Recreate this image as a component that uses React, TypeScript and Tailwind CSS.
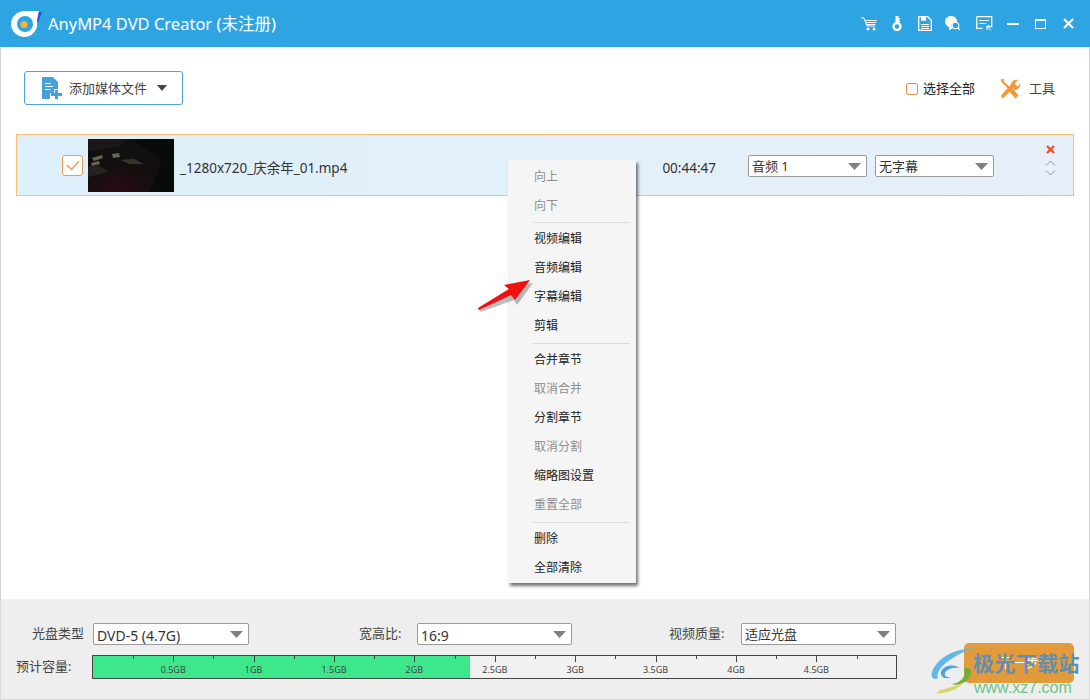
import React from 'react';

const Caret = ({ className = '' }: { className?: string }) => (
  <svg width="13" height="7" viewBox="0 0 13 7" className={className}>
    <path d="M0 0h13L6.5 7z" fill="#7f7f7f" />
  </svg>
);

const Select = ({ label, className, textClass = 'text-[13px]' }: { label: string; className: string; textClass?: string }) => (
  <div className={`flex h-[22px] items-center justify-between rounded-[2px] border border-[#9a9a9a] bg-white pl-[3px] pr-[5px] text-[#333] ${className}`}>
    <span className={`pt-[2px] ${textClass}`}>{label}</span>
    <Caret />
  </div>
);

const Logo = () => (
  <svg width="32" height="28" viewBox="0 0 32 28" className="shrink-0">
    <path d="M24 2h7l-5 14z" fill="#2257d8" />
    <path d="M14 1h14c-1 3-1 6-2 9 2 8-4 17-12 17C6 27 0 21 0 14S6 1 14 1z" fill="#fff" />
    <circle cx="14" cy="14" r="8" fill="#2fa4e3" />
    <circle cx="13" cy="14.5" r="3.6" fill="#f6b52c" />
  </svg>
);

const TitleIcons = () => (
  <div className="flex items-center text-white">
    <svg width="16" height="14" viewBox="0 0 16 14" className="ml-0">
      <path d="M0 1h3l3 8h8" fill="none" stroke="#fff" strokeWidth="1" />
      <path d="M4 3h12v1H4zM5 5h10v1H5zM5.500 7h9v1h-9z" fill="#fff" />
      <circle cx="7" cy="12" r="1.500" fill="#fff" />
      <circle cx="13" cy="12" r="1.500" fill="#fff" />
    </svg>
    <svg width="10" height="15" viewBox="0 0 10 15" className="ml-[15px]">
      <path d="M3.500 0h3v7h-3z" fill="#fff" />
      <path d="M6 2h2v1.500H6zM6 4.500h2V6H6z" fill="#fff" />
      <circle cx="5" cy="10.500" r="3.500" fill="none" stroke="#fff" strokeWidth="2.400" />
    </svg>
    <svg width="14" height="15" viewBox="0 0 14 15" className="ml-[16px]">
      <path d="M.7.700h9l3.600 3.600v10H.7z" fill="none" stroke="#fff" strokeWidth="1.300" />
      <path d="M3 .700h5v4H3zM3 8h8v1H3zM3 10h8v1H3zM3 12h8v1H3z" fill="#fff" />
    </svg>
    <svg width="16" height="15" viewBox="0 0 16 15" className="ml-[13px]">
      <path d="M6 0c3.300 0 6 2.300 6 5 0 .5 0 .8-.2 1.200A3.800 3.800 0 0 0 6.500 10c0 1 .3 1.800.8 2.500L4 14.500l.3-3.200C1.800 10.400 0 8 0 5.500 0 2.500 2.700 0 6 0z" fill="#fff" />
      <circle cx="10.500" cy="9.500" r="3.300" fill="none" stroke="#fff" strokeWidth="1.100" />
      <path d="M13 12l2 2" stroke="#fff" strokeWidth="1.100" />
    </svg>
    <svg width="17" height="15" viewBox="0 0 17 15" className="ml-[15px]">
      <path d="M.7.700h15v10h-5.500M6.500 12.300H.7V.700" fill="none" stroke="#fff" strokeWidth="1.300" />
      <path d="M3 4h10v1H3zM3 7h7v1H3z" fill="#fff" />
      <path d="M11 10v4M11 10h3.500M11 10l4 4.500" fill="none" stroke="#fff" strokeWidth="1" />
    </svg>
    <div className="ml-[14px] h-[2px] w-[12px] bg-white" />
    <div className="ml-[16px] h-[10px] w-[11px] border border-t-2 border-white" />
    <svg width="11" height="11" viewBox="0 0 11 11" className="ml-[17px]">
      <path d="M1 1l9 9M10 1l-9 9" stroke="#fff" strokeWidth="2" />
    </svg>
  </div>
);

const menu: (null | { t: string; off: boolean })[] = [
  { t: '向上', off: true },
  { t: '向下', off: true },
  null,
  { t: '视频编辑', off: false },
  { t: '音频编辑', off: false },
  { t: '字幕编辑', off: false },
  { t: '剪辑', off: false },
  null,
  { t: '合并章节', off: false },
  { t: '取消合并', off: true },
  { t: '分割章节', off: false },
  { t: '取消分割', off: true },
  { t: '缩略图设置', off: false },
  { t: '重置全部', off: true },
  null,
  { t: '删除', off: false },
  { t: '全部清除', off: false },
];

const ticks = Array.from({ length: 19 }, (_, i) => i);

const CapacityBar = () => (
  <div className="relative h-[24px] w-[805px] border border-[#444] bg-[#f1f1f1]">
    <div className="h-full w-[377px] bg-[#3de88c]" />
    {ticks.map((i) => {
      const major = i % 2 === 1;
      const gb = (i + 1) / 4;
      return (
        <React.Fragment key={i}>
          <div className={`absolute top-0 w-px bg-[#444] ${major ? 'h-[6px]' : 'h-[3px]'}`} style={{ left: 40 + i * 40.2 }} />
          {major && (
            <span className="absolute top-[7px] w-[50px] -translate-x-1/2 text-center text-[9px] leading-[14px] text-[#444]" style={{ left: 40 + i * 40.2 }}>
              {gb}GB
            </span>
          )}
        </React.Fragment>
      );
    })}
  </div>
);

export default function App() {
  return (
    <div className="relative flex h-[700px] w-[1090px] flex-col overflow-hidden bg-white font-['Noto_Sans','Noto_Sans_CJK_SC',sans-serif]">
      {/* title bar */}
      <div className="flex h-[47px] shrink-0 items-center justify-between bg-[#2fa4e3] pl-[11px] pr-[16px]">
        <div className="flex items-center gap-[5px]">
          <Logo />
          <span className="pt-[1px] text-[16.500px] text-white">AnyMP4 DVD Creator (未注册)</span>
        </div>
        <TitleIcons />
      </div>

      <div className="flex min-h-0 flex-1 flex-col border-x border-[#d2d2d2]">
        {/* toolbar */}
        <div className="flex h-[87px] shrink-0 items-start justify-between pl-[23px] pr-[34px] pt-[24px]">
          <div className="flex h-[34px] w-[159px] items-center rounded-[3px] border border-[#4ba3dd] pl-[17px]">
            <svg width="21" height="22" viewBox="0 0 21 22">
              <path d="M1 0h10l5 5v7h-4v4H8v6H1a1 1 0 0 1-1-1V1a1 1 0 0 1 1-1z" fill="#45a1dc" />
              <path d="M3 6h6v1H3zM3 9h8v1H3zM3 12h6v1H3z" fill="#fff" />
              <path d="M13 13h3v3h4v3h-4v3h-3v-3H9v-3h4z" fill="#45a1dc" />
            </svg>
            <span className="ml-[6px] pt-[2px] text-[13px] text-[#444]">添加媒体文件</span>
            <svg width="10" height="6" viewBox="0 0 10 6" className="ml-[10px]">
              <path d="M0 0h10L5 6z" fill="#444" />
            </svg>
          </div>
          <div className="flex items-center pt-[8px]">
            <div className="h-[12px] w-[12px] rounded-[2px] border border-[#e9924b]" />
            <span className="ml-[5px] text-[13px] text-[#222]">选择全部</span>
            <svg width="20" height="20" viewBox="0 0 20 20" className="ml-[25px]">
              <path d="M2 2l9 9" stroke="#f4963a" strokeWidth="2.200" />
              <path d="M1 1.500L4 0.500" stroke="#f4963a" strokeWidth="2" />
              <path d="M10 10l7 8" stroke="#f4963a" strokeWidth="4.500" />
              <path d="M3 17L13 6" stroke="#f4963a" strokeWidth="3.600" strokeLinecap="round" />
              <path d="M11 6c0-3 3-6 7-5l-3 3 1 2.500 2.500.5 1.500-3c1 4-2 7-6 7z" fill="#f4963a" />
            </svg>
            <span className="ml-[9px] text-[13px] text-[#444]">工具</span>
          </div>
        </div>

        {/* file row */}
        <div className="mx-[15px] flex h-[62px] shrink-0 items-center border border-[#fbbd74] bg-gradient-to-r from-[#ddf0fb] to-[#e7eff9]">
          <div className="ml-[45px] flex h-[21px] w-[21px] items-center justify-center rounded-[3px] border border-[#ea9a52] bg-white">
            <svg width="14" height="11" viewBox="0 0 14 11">
              <path d="M1 5l4.500 4.500L13 1" fill="none" stroke="#ea9a52" strokeWidth="1.500" />
            </svg>
          </div>
          <svg width="86" height="53" viewBox="0 0 86 53" className="ml-[5px]">
            <defs>
              <radialGradient id="thumbRed" cx="0.35" cy="1" r="0.55">
                <stop offset="0" stopColor="#2c0a12" />
                <stop offset="1" stopColor="#11100e" />
              </radialGradient>
              <filter id="thumbSoft">
                <feGaussianBlur stdDeviation="0.7" />
              </filter>
            </defs>
            <rect width="86" height="53" fill="url(#thumbRed)" />
            <path d="M44 0h42v53H62L74 22z" fill="#090b0a" />
            <g filter="url(#thumbSoft)">
              <path d="M0 0h40L30 8 0 12z" fill="#1a1916" />
              <path d="M4 19l10-3 1 3-9 3zM3 24l8-2 1 3-8 2zM24 15l7-1 1 4-7 1z" fill="#6a6353" />
              <path d="M32 21l14-1 10 5-14 0z" fill="#37342c" />
              <path d="M0 28l10-2 10 7-20 5z" fill="#262320" />
            </g>
          </svg>
          <span className="ml-[6px] pt-[6px] text-[13.500px] text-[#333]">_1280x720_庆余年_01.mp4</span>
          <span className="ml-[315px] pt-[6px] text-[13.500px] text-[#333]">00:44:47</span>
          <Select label="音频 1" className="ml-[32px] mt-[2px] w-[119px]" />
          <Select label="无字幕" className="ml-[8px] mt-[2px] w-[119px]" />
          <div className="ml-[51px] flex flex-col items-center pb-[10px]">
            <svg width="9" height="9" viewBox="0 0 9 9">
              <path d="M1 1l7 7M8 1L1 8" stroke="#e8502a" strokeWidth="2.200" />
            </svg>
            <svg width="11" height="6" viewBox="0 0 11 6" className="mt-[6px]">
              <path d="M1 5.500l4.500-4.500 4.500 4.500" fill="none" stroke="#999" />
            </svg>
            <svg width="11" height="6" viewBox="0 0 11 6" className="mt-[4px]">
              <path d="M1 .5l4.500 4.500 4.500-4.500" fill="none" stroke="#999" />
            </svg>
          </div>
        </div>
        <div className="flex-1" />
      </div>

      {/* bottom panel */}
      <div className="h-[101px] shrink-0 border-x border-b border-[#d8d8d8] bg-[#eeeeee] pt-[23px]">
        <div className="flex h-[24px] items-center text-[13px] text-[#444]">
          <span className="ml-[31px] w-[61px]">光盘类型</span>
          <Select label="DVD-5 (4.7G)" className="w-[156px]" textClass="text-[14px]" />
          <span className="ml-[110px] w-[58px]">宽高比:</span>
          <Select label="16:9" className="w-[155px]" textClass="text-[14px]" />
          <span className="ml-[97px] w-[72px]">视频质量:</span>
          <Select label="适应光盘" className="w-[155px]" />
        </div>
        <div className="mt-[9px] flex items-center text-[13px] text-[#444]">
          <span className="ml-[15px] w-[76px]">预计容量:</span>
          <CapacityBar />
        </div>
      </div>

      {/* next button with the site watermark on top */}
      <div className="absolute left-[964px] top-[643px] flex h-[40px] w-[110px] items-center justify-center rounded-[5px] bg-[#e29a3a] text-[13px] text-white">
        下一步
      </div>
      <div className="absolute left-[930px] top-[646px] flex items-start">
        <svg width="46" height="50" viewBox="0 0 46 50">
          <path d="M44 2C26 3 8 10 2 26c-2 7 3 8 6 6C5 24 20 10 44 2z" fill="#62b8e8" />
          <path d="M30 22c-8-5-17-2-19 4-1 5 5 8 10 5-4 1-7-1-6-4 1-4 9-6 15-5z" fill="#4f9fdc" />
          <path d="M34 22c3 8-3 15-12 16 4 2 18 0 19-12 0-3-3-5-7-4z" fill="#6fb03a" />
          <path d="M6 48c14-2 22-4 28-12-8 4-16 6-24 8z" fill="#d6d86a" />
        </svg>
      </div>
      <div className="absolute left-[973px] top-[648px] text-[21px] font-bold leading-[30px] tracking-[0.4px] text-[#5f8fb5]">极光下载站</div>
      <div className="absolute left-[974px] top-[678px] font-['Liberation_Sans',sans-serif] text-[16px] leading-[20px] text-[#6cc58a]">www.xz7.com</div>

      {/* context menu */}
      <div className="absolute left-[508px] top-[160px] w-[128px] bg-[#f5f5f5] pt-[2.500px] shadow-[2px_3px_3px_rgba(0,0,0,0.55)]">
        {menu.map((m, i) =>
          m ? (
            <div key={i} className={`flex h-[29px] items-center pl-[26px] text-[12px] ${m.off ? 'text-[#8f8f8f]' : 'text-[#222]'}`}>
              {m.t}
            </div>
          ) : (
            <div key={i} className={`ml-[25px] mr-[6px] flex items-center ${i === 2 ? 'h-[4px]' : 'h-[5px]'}`}>
              <div className="h-px w-full bg-[#dcdcdc]" />
            </div>
          ),
        )}
      </div>

      {/* red arrow */}
      <svg width="60" height="40" viewBox="0 0 60 40" className="absolute left-[474px] top-[276px]">
        <path d="M6 34l-2-2 32-19-4-4 26-4-16 22-3-5z" fill="#000" opacity="0.25" transform="translate(1 2)" />
        <path d="M5 34l-1-2 31-19-5-4 26-5-15 20-4-5z" fill="#f01010" />
      </svg>
    </div>
  );
}
